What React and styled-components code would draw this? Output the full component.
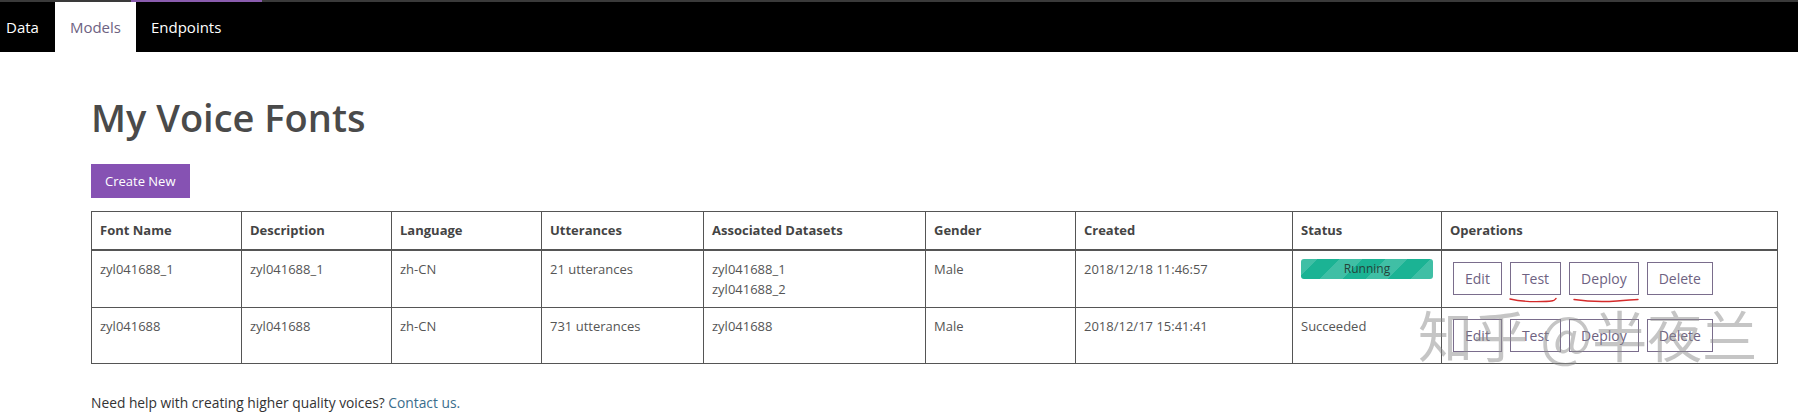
import React from "react";
import styled, { createGlobalStyle } from "styled-components";

const GlobalStyle = createGlobalStyle`
  html, body { margin: 0; padding: 0; background: #fff; overflow: hidden; }
  body { font-family: "Open Sans", "Noto Sans", "Liberation Sans", sans-serif; color: #555; }
  * { box-sizing: border-box; }
`;

const Page = styled.div`
  position: relative;
  width: 1798px;
  height: 420px;
`;

const Nav = styled.nav`
  background: #000;
  height: 52px;
  display: flex;
  flex-direction: column;
`;

const TopStrip = styled.div`
  height: 2px;
  background: #3a3a3a;
  display: flex;
`;

const Indicator = styled.div`
  margin-left: 131px;
  width: 131px;
  height: 100%;
  background: #8a5cae;
`;

const TabBar = styled.div`
  flex: 1;
  display: flex;
  align-items: stretch;
`;

const Tab = styled.div`
  display: flex;
  align-items: center;
  padding: 0 15px;
  font-size: 15px;
  color: ${(p) => (p.$active ? "#6e6282" : "#fff")};
  background: ${(p) => (p.$active ? "#fff" : "transparent")};
  &:first-child { padding-left: 6px; padding-right: 16px; }
`;

const Main = styled.main`
  padding: 0 21px 0 91px;
`;

const Title = styled.h1`
  margin: 43px 0 0;
  font-size: 38px;
  line-height: 1.2;
  font-weight: 600;
  color: #4a4a4a;
`;

const PrimaryButton = styled.button`
  margin-top: 23px;
  height: 34px;
  padding: 0 14px;
  border: none;
  background: #8652b3;
  color: #fff;
  font-family: inherit;
  font-size: 13px;
  display: block;
`;

const Table = styled.table`
  margin-top: 13px;
  width: 1686px;
  table-layout: fixed;
  border-collapse: collapse;
  border: 1px solid #555;
`;

const Th = styled.th`
  text-align: left;
  font-size: 13px;
  font-weight: 700;
  color: #444;
  line-height: 20px;
  padding: 8px 8px 9px;
  border: 1px solid #555;
  border-bottom: 2px solid #555;
`;

const Td = styled.td`
  vertical-align: top;
  font-size: 13px;
  line-height: 20px;
  color: #555;
  padding: 8px;
  border: 1px solid #555;
`;

const Line = styled.div``;

const Badge = styled.div`
  height: 20px;
  border-radius: 3px;
  background-color: #1bb394;
  background-image: repeating-linear-gradient(
    -45deg,
    rgba(255, 255, 255, 0.16) 0 16px,
    transparent 16px 32px
  );
  color: #24443a;
  font-size: 12px;
  line-height: 20px;
  text-align: center;
`;

const Ops = styled.div`
  display: flex;
  gap: 8px;
  padding: 3px;
`;

const OpButton = styled.button`
  position: relative;
  height: 33px;
  min-width: 48px;
  padding: 0 11px;
  background: #fff;
  border: 1px solid #7a6d8c;
  color: #6e6282;
  font-family: inherit;
  font-size: 14px;
`;

const Scribble = styled.svg`
  position: absolute;
  left: ${(p) => p.$left}px;
  top: 100%;
  margin-top: 2px;
  overflow: visible;
`;

const Footer = styled.p`
  margin: 29px 0 0;
  font-size: 13.8px;
  line-height: 19px;
  color: #333;
`;

const Link = styled.a`
  color: #3a6d8c;
  text-decoration: none;
`;

const Watermark = styled.div`
  position: absolute;
  left: 1418px;
  top: 306px;
  font-family: "Noto Sans CJK SC", "Open Sans", sans-serif;
  font-size: 55px;
  line-height: 1;
  color: rgba(140, 140, 140, 0.5);
  white-space: nowrap;
  pointer-events: none;
`;

const columns = [150, 150, 150, 162, 222, 150, 217, 149, 336];
const headers = [
  "Font Name",
  "Description",
  "Language",
  "Utterances",
  "Associated Datasets",
  "Gender",
  "Created",
  "Status",
  "Operations",
];

const rows = [
  {
    name: "zyl041688_1",
    desc: "zyl041688_1",
    lang: "zh-CN",
    utt: "21 utterances",
    sets: ["zyl041688_1", "zyl041688_2"],
    gender: "Male",
    created: "2018/12/18 11:46:57",
    status: "Running",
    marked: true,
  },
  {
    name: "zyl041688",
    desc: "zyl041688",
    lang: "zh-CN",
    utt: "731 utterances",
    sets: ["zyl041688"],
    gender: "Male",
    created: "2018/12/17 15:41:41",
    status: "Succeeded",
    marked: false,
  },
];

function Underline({ width, left, d }) {
  return (
    <Scribble $left={left} width={width} height="8" viewBox={`0 0 ${width} 8`}>
      <path d={d} fill="none" stroke="#d52b2b" strokeWidth="1.4" strokeLinecap="round" />
    </Scribble>
  );
}

export default function App() {
  return (
    <Page>
      <GlobalStyle />
      <Nav>
        <TopStrip>
          <Indicator />
        </TopStrip>
        <TabBar>
          <Tab>Data</Tab>
          <Tab $active>Models</Tab>
          <Tab>Endpoints</Tab>
        </TabBar>
      </Nav>
      <Main>
        <Title>My Voice Fonts</Title>
        <PrimaryButton>Create New</PrimaryButton>
        <Table>
          <colgroup>
            {columns.map((w, i) => (
              <col key={i} style={{ width: w }} />
            ))}
          </colgroup>
          <thead>
            <tr>
              {headers.map((h) => (
                <Th key={h}>{h}</Th>
              ))}
            </tr>
          </thead>
          <tbody>
            {rows.map((r) => (
              <tr key={r.name}>
                <Td>{r.name}</Td>
                <Td>{r.desc}</Td>
                <Td>{r.lang}</Td>
                <Td>{r.utt}</Td>
                <Td>
                  {r.sets.map((s) => (
                    <Line key={s}>{s}</Line>
                  ))}
                </Td>
                <Td>{r.gender}</Td>
                <Td>{r.created}</Td>
                <Td>{r.status === "Running" ? <Badge>Running</Badge> : r.status}</Td>
                <Td>
                  <Ops>
                    <OpButton>Edit</OpButton>
                    <OpButton>
                      Test
                      {r.marked && (
                        <Underline
                          width={48}
                          left={-2}
                          d="M1 3 C 10 5, 22 6, 34 5.5 S 45 4.5, 47 2.5"
                        />
                      )}
                    </OpButton>
                    <OpButton>
                      Deploy
                      {r.marked && (
                        <Underline
                          width={66}
                          left={3}
                          d="M1 3.5 C 14 5.5, 30 6, 44 5 S 60 3.5, 65 3.5"
                        />
                      )}
                    </OpButton>
                    <OpButton>Delete</OpButton>
                  </Ops>
                </Td>
              </tr>
            ))}
          </tbody>
        </Table>
        <Footer>
          Need help with creating higher quality voices? <Link href="#">Contact us.</Link>
        </Footer>
      </Main>
      <Watermark>知乎 @半夜兰</Watermark>
    </Page>
  );
}
